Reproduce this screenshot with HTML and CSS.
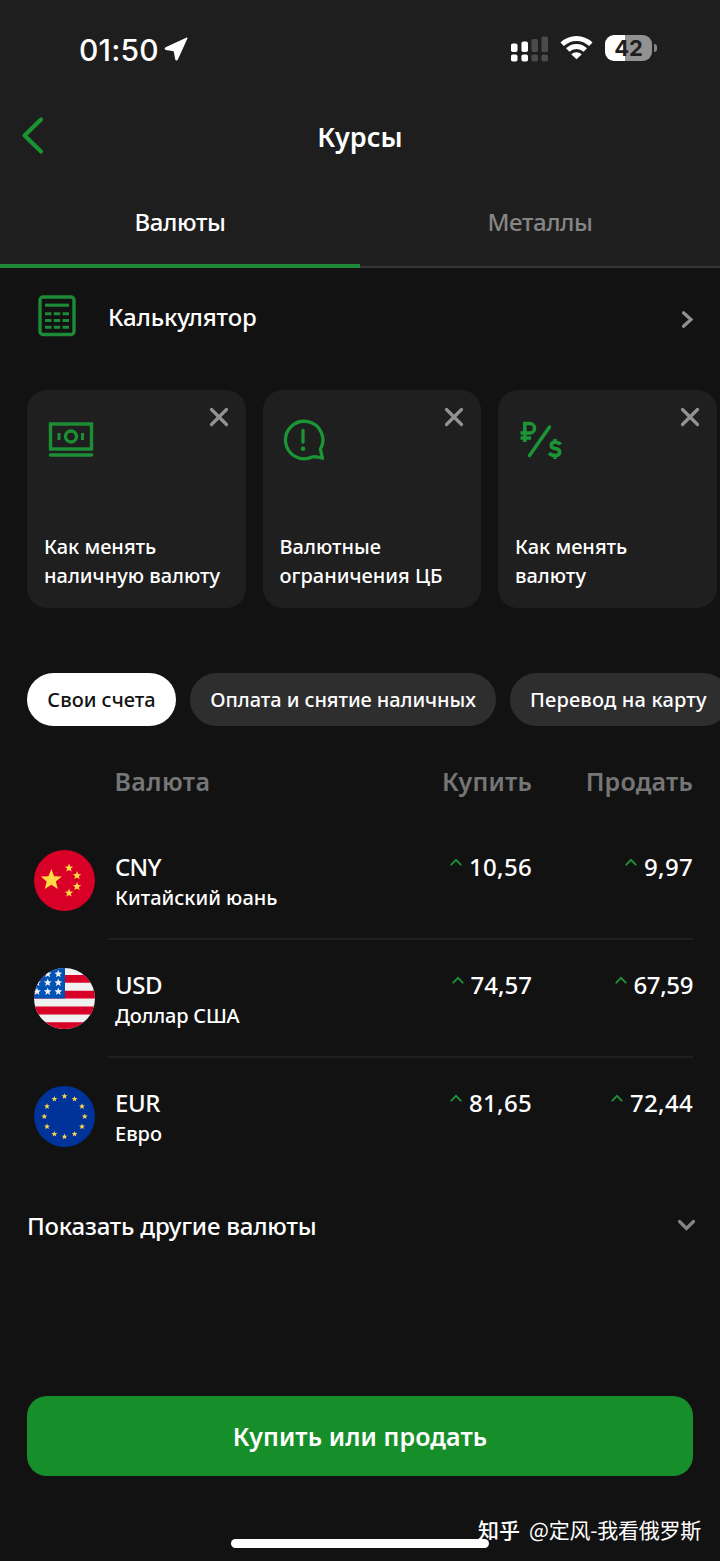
FILE: index.html
```html
<!DOCTYPE html>
<html lang="ru">
<head>
<meta charset="utf-8">
<title>Курсы</title>
<link rel="stylesheet" href="styles.css">
</head>
<body>
<svg class="defs" width="0" height="0" aria-hidden="true">
  <symbol id="star" viewBox="-.9 -.9 1.8 1.8" overflow="visible"><polygon points="0,-1 .26,-.33 .951,-.309 .41,.133 .588,.809 0,.43 -.588,.809 -.41,.133 -.951,-.309 -.26,-.33"/></symbol>
  <symbol id="close" viewBox="0 0 20 20"><path d="M2.500 2.500l15 15M17.500 2.500l-15 15" fill="none" stroke="currentColor" stroke-width="3.200" stroke-linecap="round"/></symbol>
  <symbol id="up" viewBox="0 0 12 8"><path d="M1.300 6.600L6 1.900l4.700 4.700" fill="none" stroke="currentColor" stroke-width="2" stroke-linecap="round"/></symbol>
</svg>
<div class="screen">
  <header class="header">
    <div class="status">
      <div class="status-left">
        <span class="time">01:50</span>
        <svg class="location" width="24" height="24" viewBox="0 0 24 24"><path d="M22.200 .7L1.600 10.300C.2 11 .4 12.800 1.900 13L9.700 14.200 11.200 22.300C11.500 23.900 13.300 24 13.900 22.600L23.300 1.800C23.700.9 23.100.3 22.200.7Z" fill="#fff"/></svg>
      </div>
      <div class="status-right">
        <svg class="signal" width="38" height="26" viewBox="0 0 38 26">
          <g fill="#fff"><rect x="0" y="7.500" width="6.500" height="8.500" rx="1.800"/><rect x="10.500" y="5.500" width="6.500" height="10.500" rx="1.800"/><rect x="0" y="18.500" width="6.500" height="7" rx="1.800"/><rect x="10.500" y="18.500" width="6.500" height="7" rx="1.800"/></g>
          <g fill="#4b4b4b"><rect x="20.500" y="3" width="6.500" height="13" rx="1.800"/><rect x="30.500" y="0.500" width="6.500" height="15.500" rx="1.800"/><rect x="20.500" y="18.500" width="6.500" height="7" rx="1.800"/><rect x="30.500" y="18.500" width="6.500" height="7" rx="1.800"/></g>
        </svg>
        <svg class="wifi" width="33" height="25" viewBox="0 0 33 25"><g fill="none" stroke="#fff" stroke-width="4.900"><path d="M2.200 9.300a20.500 20.500 0 0 1 28.600 0"/><path d="M7.700 15.100a12.700 12.700 0 0 1 17.600 0"/></g><path d="M11.200 19.300a7.700 7.700 0 0 1 10.600 0L16.500 24.300z" fill="#fff"/></svg>
        <div class="battery"><span class="battery-level">42</span></div>
        <span class="battery-tip"></span>
      </div>
    </div>
    <div class="navbar">
      <svg class="back" width="24" height="40" viewBox="0 0 24 40"><path d="M21 3.500L4.500 19.500l16.500 16" fill="none" stroke="#1a9433" stroke-width="4.200" stroke-linecap="round" stroke-linejoin="round"/></svg>
      <h1 class="title">Курсы</h1>
    </div>
    <nav class="tabs">
      <div class="tab tab-active">Валюты</div>
      <div class="tab">Металлы</div>
    </nav>
  </header>
  <main class="main">
    <section class="calculator">
      <svg class="calculator-icon" width="38" height="42" viewBox="0 0 38 42" fill="none" stroke="#1c8a37"><rect x="2" y="2" width="34" height="37.500" rx="3" stroke-width="3.400"/><path d="M7 10.200h24" stroke-width="3.200"/><path d="M7 18.700h24M7 25.500h24M7 32.200h24" stroke-width="3" stroke-dasharray="6.400 2.400"/></svg>
      <span class="calculator-label">Калькулятор</span>
      <svg class="chevron" width="13" height="19" viewBox="0 0 13 19"><path d="M2.500 2.700l7.500 6.800-7.500 6.800" fill="none" stroke="#919191" stroke-width="3.200" stroke-linecap="round"/></svg>
    </section>
    <section class="cards">
      <article class="card">
        <svg class="card-close" width="20" height="20"><use href="#close"/></svg>
        <svg class="card-icon icon-cash" width="46" height="44" viewBox="0 0 46 44" fill="none" stroke="#1c8f35"><rect x="2.500" y="6" width="41" height="25" stroke-width="3.400"/><circle cx="23" cy="18.500" r="5.500" stroke-width="3.400"/><path d="M11 15v7M34.500 15v7" stroke-width="3"/><path d="M2.500 37h41" stroke-width="3.600" stroke-linecap="round"/></svg>
        <p class="card-text">Как менять<br>наличную валюту</p>
      </article>
      <article class="card">
        <svg class="card-close" width="20" height="20"><use href="#close"/></svg>
        <svg class="card-icon icon-alert" width="46" height="44" viewBox="0 0 46 44" fill="none" stroke="#1b9535" stroke-width="3.300" stroke-linecap="round" stroke-linejoin="round"><path d="M41.500 40.200L39.400 31.300A18.700 18.700 0 1 0 31 39Q35 38.200 41.500 40.200Z"/><path d="M22 12.500v11.500"/><circle cx="22" cy="30.700" r="2.300" fill="#1b9535" stroke="none"/></svg>
        <p class="card-text">Валютные<br>ограничения ЦБ</p>
      </article>
      <article class="card">
        <svg class="card-close" width="20" height="20"><use href="#close"/></svg>
        <svg class="card-icon icon-exchange" width="46" height="44" viewBox="0 0 46 44" fill="none" stroke="#1b9535" stroke-width="3.500"><path d="M6.800 24V5.500h5a4.700 4.700 0 0 1 0 9.500H2.500M2.500 20h10.500"/><path d="M31.500 9L11.500 37.500" stroke-linecap="round"/><path d="M42.500 26.500C41.200 24.800 39.500 24.300 37 24.300c-5 0-5 5.600 0 6.200 6.300.700 6.300 7 0 7-2.800 0-4.600-.700-6-2.300M37 21v3.300M37 37.500v3.500"/></svg>
        <p class="card-text">Как менять<br>валюту</p>
      </article>
    </section>
    <section class="chips">
      <div class="chip chip-active">Свои счета</div>
      <div class="chip chip-wide">Оплата и снятие наличных</div>
      <div class="chip chip-last">Перевод на карту</div>
    </section>
    <section class="rates">
      <div class="rates-head"><span class="head-name">Валюта</span><span class="head-buy">Купить</span><span class="head-sell">Продать</span></div>
      <div class="rate">
        <svg class="flag" width="61" height="61" viewBox="0 0 61 61"><circle cx="30.500" cy="30.500" r="30.500" fill="#d80027"/><g fill="#ffda44"><use href="#star" x="7.300" y="20" width="20" height="20"/><use href="#star" x="31" y="14" width="8" height="8"/><use href="#star" x="39" y="21.500" width="8" height="8"/><use href="#star" x="39" y="32.500" width="8" height="8"/><use href="#star" x="31" y="39" width="8" height="8"/></g></svg>
        <div class="rate-body"><div class="rate-name"><b class="code code-cny">CNY</b><span class="name">Китайский юань</span></div>
        <div class="price price-loose"><svg width="12" height="8"><use href="#up"/></svg>10,56</div><div class="price price-sell price-loose"><svg width="12" height="8"><use href="#up"/></svg>9,97</div></div>
      </div>
      <div class="rate">
        <svg class="flag" width="61" height="61" viewBox="0 0 61 61"><clipPath id="round"><circle cx="30.500" cy="30.500" r="30.500"/></clipPath><g clip-path="url(#round)"><path fill="#f0f0f0" d="M0 0h61v61H0z"/><path fill="#d80027" d="M0 6.900h61v7.900H0zM0 22.700h61v7.900H0zM0 38.500h61v7.900H0zM0 54.300h61V61H0z"/><path fill="#0052b4" d="M0 0h31v30.600H0z"/><g fill="#f0f0f0"><use href="#star" x="10" y="2.200" width="7.400" height="7.400"/><use href="#star" x="20.600" y="2.200" width="7.400" height="7.400"/><use href="#star" x="-.7" y="11" width="7.400" height="7.400"/><use href="#star" x="10" y="11" width="7.400" height="7.400"/><use href="#star" x="20.600" y="11" width="7.400" height="7.400"/><use href="#star" x="-.7" y="19.900" width="7.400" height="7.400"/><use href="#star" x="10" y="19.900" width="7.400" height="7.400"/><use href="#star" x="20.600" y="19.900" width="7.400" height="7.400"/></g></g></svg>
        <div class="rate-body"><div class="rate-name"><b class="code">USD</b><span class="name name-usd">Доллар США</span></div>
        <div class="price"><svg width="12" height="8"><use href="#up"/></svg>74,57</div><div class="price price-sell price-tight"><svg width="12" height="8"><use href="#up"/></svg>67,59</div></div>
      </div>
      <div class="rate">
        <svg class="flag" width="61" height="61" viewBox="0 0 61 61"><circle cx="30.500" cy="30.500" r="30.500" fill="#003399"/><g fill="#f5d34b"><use href="#star" x="27.700" y="7.500" width="5.600" height="5.600"/><use href="#star" x="37.800" y="10.200" width="5.600" height="5.600"/><use href="#star" x="45.200" y="17.600" width="5.600" height="5.600"/><use href="#star" x="47.900" y="27.700" width="5.600" height="5.600"/><use href="#star" x="45.200" y="37.800" width="5.600" height="5.600"/><use href="#star" x="37.800" y="45.200" width="5.600" height="5.600"/><use href="#star" x="27.700" y="47.900" width="5.600" height="5.600"/><use href="#star" x="17.600" y="45.200" width="5.600" height="5.600"/><use href="#star" x="10.200" y="37.800" width="5.600" height="5.600"/><use href="#star" x="7.500" y="27.700" width="5.600" height="5.600"/><use href="#star" x="10.200" y="17.600" width="5.600" height="5.600"/><use href="#star" x="17.600" y="10.200" width="5.600" height="5.600"/></g></svg>
        <div class="rate-body"><div class="rate-name"><b class="code">EUR</b><span class="name">Евро</span></div>
        <div class="price price-loose"><svg width="12" height="8"><use href="#up"/></svg>81,65</div><div class="price price-sell price-loose"><svg width="12" height="8"><use href="#up"/></svg>72,44</div></div>
      </div>
    </section>
    <section class="more"><span>Показать другие валюты</span><svg width="19" height="13" viewBox="0 0 19 13"><path d="M2.500 2.500l7 7 7-7" fill="none" stroke="#858585" stroke-width="3.200" stroke-linecap="round"/></svg></section>
    <button class="action">Купить или продать</button>
  </main>
  <div class="home-indicator"></div>
  <div class="watermark"><span class="brand">知乎</span><span class="author">@定风-我看俄罗斯</span></div>
</div>
</body>
</html>
```
FILE: styles.css
```css
* { box-sizing: border-box; }
body { margin: 0; background: #121212; color: #fff; font-family: "Noto Sans", "Open Sans", sans-serif; font-weight: 500; }
.defs { position: absolute; }
.screen { position: relative; width: 720px; height: 1561px; overflow: hidden; background: #121212; }
svg { display: block; flex: none; }
.header { height: 268px; background: #1e1e1e; }
.status { height: 98px; padding: 0 63px 0 79px; display: flex; justify-content: space-between; }
.status-left { display: flex; padding-top: 31px; gap: 5px; }
.time { font: 500 30px/38px Inter, sans-serif; letter-spacing: 0.2px; }
.location { margin-top: 6px; }
.status-right { display: flex; align-items: flex-start; padding-top: 36px; }
.signal { margin-right: -1px; }
.wifi { margin: -1px 12px 0; }
.battery { width: 47px; height: 26px; margin-top: -1px; border-radius: 9px; background: linear-gradient(90deg, #fff 42%, #929292 42%); color: #1f1f1f; text-align: center; font: 700 22px/26px Inter, sans-serif; }
.battery-tip { width: 3px; height: 8px; margin: 8px 0 0 2px; border-radius: 0 4px 4px 0; background: #858585; }
.navbar { height: 80px; display: flex; padding: 18px 20px; }
.title { flex: 1; margin: 0 24px 0 0; text-align: center; font-size: 27px; line-height: 42px; font-weight: 600; }
.tabs { height: 90px; display: flex; }
.tab { flex: 1; padding-top: 26px; height: 90px; text-align: center; font-size: 24px; line-height: 36px; letter-spacing: -0.4px; color: #858585; border-bottom: 2px solid #363636; }
.tab-active { color: #fff; border-bottom: 4px solid #21883a; }
.calculator { height: 122px; padding: 26px 26px 0 38px; display: flex; align-items: flex-start; }
.calculator-icon { margin-top: 1px; }
.calculator-label { flex: 1; padding-left: 32px; font-size: 24px; line-height: 46px; letter-spacing: -0.15px; }
.chevron { margin-top: 16px; }
.cards { display: flex; gap: 17px; padding-left: 27px; }
.card { position: relative; flex: none; width: 218.500px; height: 218px; padding: 28px 17px; border-radius: 20px; background: #1f1f1f; }
.card-close { position: absolute; top: 16.500px; right: 17px; color: #929292; }
.icon-cash { margin-left: 3.500px; }
.icon-alert { margin-left: 1.500px; }
.icon-exchange { margin-left: 3px; }
.card-text { margin: 70px 0 0; font-size: 20px; line-height: 29px; white-space: nowrap; }
.chips { display: flex; gap: 14px; padding: 65px 0 0 27px; }
.chip { flex: none; height: 53px; line-height: 53px; border-radius: 27px; background: #2e2e2e; font-size: 20px; text-align: center; white-space: nowrap; }
.chip-active { width: 149px; background: #fff; color: #121212; }
.chip-wide { width: 306px; letter-spacing: -0.08px; }
.chip-last { width: 220px; text-align: left; padding-left: 20px; letter-spacing: 0.18px; }
.rates-head { display: flex; height: 96px; padding: 37px 27px 0 114.500px; font-size: 25px; line-height: 36px; font-weight: 600; letter-spacing: 0.2px; color: #767676; }
.head-name { flex: 1; letter-spacing: 0.4px; }
.head-sell { width: 161px; text-align: right; }
.rate { display: flex; height: 118px; padding: 0 27px 0 33.500px; }
.flag { margin-top: 27.500px; }
.rate-body { flex: 1; display: flex; margin-left: 13.500px; padding: 28px 0 0 7px; border-bottom: 2px solid #202020; }
.rate:last-child .rate-body { border-bottom: 0; }
.rate-name { flex: 1; display: flex; flex-direction: column; }
.code { font-size: 24px; line-height: 34px; font-weight: 500; letter-spacing: -0.4px; }
.code-cny { letter-spacing: -0.7px; }
.name { font-size: 20px; line-height: 27px; }
.name-usd { letter-spacing: -0.2px; }
.price { display: flex; justify-content: flex-end; gap: 7px; font-size: 24px; line-height: 34px; color: #fff; }
.price-loose { letter-spacing: 0.3px; }
.price-tight { letter-spacing: -0.4px; }
.price svg { margin-top: 8px; color: #1e9138; }
.price-sell { width: 161px; }
.more { height: 80px; padding: 32px 24px 0 27px; display: flex; justify-content: space-between; font-size: 24px; line-height: 36px; letter-spacing: -0.2px; }
.more svg { margin-top: 11px; }
.action { display: block; width: 666px; height: 80px; margin: 140px 27px 0; padding: 0; border: 0; border-radius: 20px; background: #168f2b; color: #fff; font: 600 25px/80px "Noto Sans", sans-serif; letter-spacing: 0.1px; }
.home-indicator { position: absolute; left: 231px; top: 1539px; width: 258px; height: 9px; border-radius: 5px; background: #fff; }
.watermark { position: absolute; right: 19px; top: 1514px; display: flex; gap: 9px; font: 400 21px/30px "Noto Sans CJK SC", sans-serif; white-space: nowrap; }
.brand { font-weight: 500; }
.author { letter-spacing: -0.25px; }
```
